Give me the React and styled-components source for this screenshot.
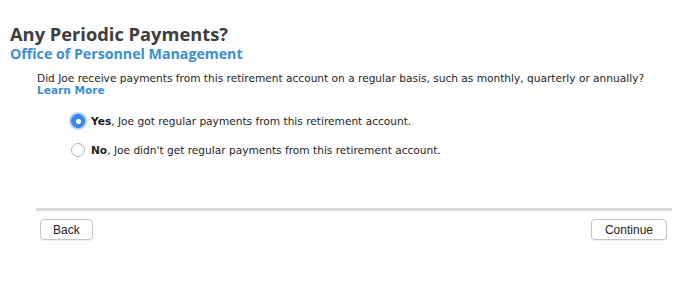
import { useState } from "react";
import styled, { createGlobalStyle } from "styled-components";

const GlobalStyle = createGlobalStyle`
  html, body {
    margin: 0;
    padding: 0;
    background: #ffffff;
  }
  body {
    font-family: "DejaVu Sans", Verdana, sans-serif;
    color: #222;
  }
`;

const Page = styled.div`
  width: 679px;
  height: 286px;
  box-sizing: border-box;
  padding: 23px 7px 0 10px;
`;

const Title = styled.h1`
  margin: 0;
  font-family: "Open Sans", "DejaVu Sans", sans-serif;
  font-weight: 700;
  font-size: 18.3px;
  line-height: 22px;
  color: #3d3d3d;
`;

const Subtitle = styled.h2`
  margin: 0;
  font-family: "Open Sans", "DejaVu Sans", sans-serif;
  font-weight: 700;
  font-size: 14.2px;
  line-height: 18px;
  color: #3a8fd3;
`;

const Body = styled.div`
  padding: 9px 0 0 27px;
`;

const Question = styled.p`
  margin: 0;
  font-size: 10.6px;
  line-height: 12px;
  color: #1e1e1e;
`;

const LearnMore = styled.a`
  display: block;
  font-size: 10.6px;
  line-height: 13px;
  font-weight: 700;
  color: #3a8fd3;
  text-decoration: none;
`;

const Options = styled.div`
  display: flex;
  flex-direction: column;
  gap: 15px;
  box-sizing: border-box;
  padding: 17px 0 0 34px;
  height: 111px;
`;

const Option = styled.label`
  display: flex;
  align-items: center;
  gap: 6px;
  font-size: 10.6px;
  line-height: 14px;
  color: #1e1e1e;
  cursor: pointer;
`;

const Dot = styled.span`
  width: 14px;
  height: 14px;
  box-sizing: border-box;
  border-radius: 50%;
  flex: none;
  display: flex;
  align-items: center;
  justify-content: center;
  border: 1px solid ${p => (p.checked ? "#2f7ef0" : "#b5b5b5")};
  background: ${p => (p.checked ? "#3b86f3" : "#fff")};
  box-shadow: ${p => (p.checked ? "0 0 0 2px rgba(90,150,240,0.45)" : "inset 0 1px 1px rgba(0,0,0,0.05)")};

  &::after {
    content: "";
    width: 5px;
    height: 5px;
    border-radius: 50%;
    background: #fff;
    display: ${p => (p.checked ? "block" : "none")};
  }
`;

const Divider = styled.hr`
  margin: 0 0 8px 26px;
  border: none;
  height: 3px;
  background: #dadada;
`;

const Footer = styled.div`
  display: flex;
  justify-content: space-between;
  padding: 0 5px 0 30px;
`;

const Button = styled.button`
  height: 21px;
  padding: 0 ${p => p.pad}px;
  font-family: "Liberation Sans", Arial, sans-serif;
  font-size: 12px;
  color: #222;
  background: #fff;
  border: 1px solid #c6c6c6;
  border-radius: 4px;
  box-shadow: 0 1px 1px rgba(0, 0, 0, 0.08);
`;

export default function App() {
  const [answer, setAnswer] = useState("yes");

  return (
    <>
      <GlobalStyle />
      <Page>
        <Title>Any Periodic Payments?</Title>
        <Subtitle>Office of Personnel Management</Subtitle>
        <Body>
          <Question>
            Did Joe receive payments from this retirement account on a regular basis, such as monthly, quarterly or annually?
          </Question>
          <LearnMore href="#">Learn More</LearnMore>
          <Options>
            <Option onClick={() => setAnswer("yes")}>
              <Dot checked={answer === "yes"} />
              <span><b>Yes</b>, Joe got regular payments from this retirement account.</span>
            </Option>
            <Option onClick={() => setAnswer("no")}>
              <Dot checked={answer === "no"} />
              <span><b>No</b>, Joe didn't get regular payments from this retirement account.</span>
            </Option>
          </Options>
        </Body>
        <Divider />
        <Footer>
          <Button pad={12}>Back</Button>
          <Button pad={13}>Continue</Button>
        </Footer>
      </Page>
    </>
  );
}
